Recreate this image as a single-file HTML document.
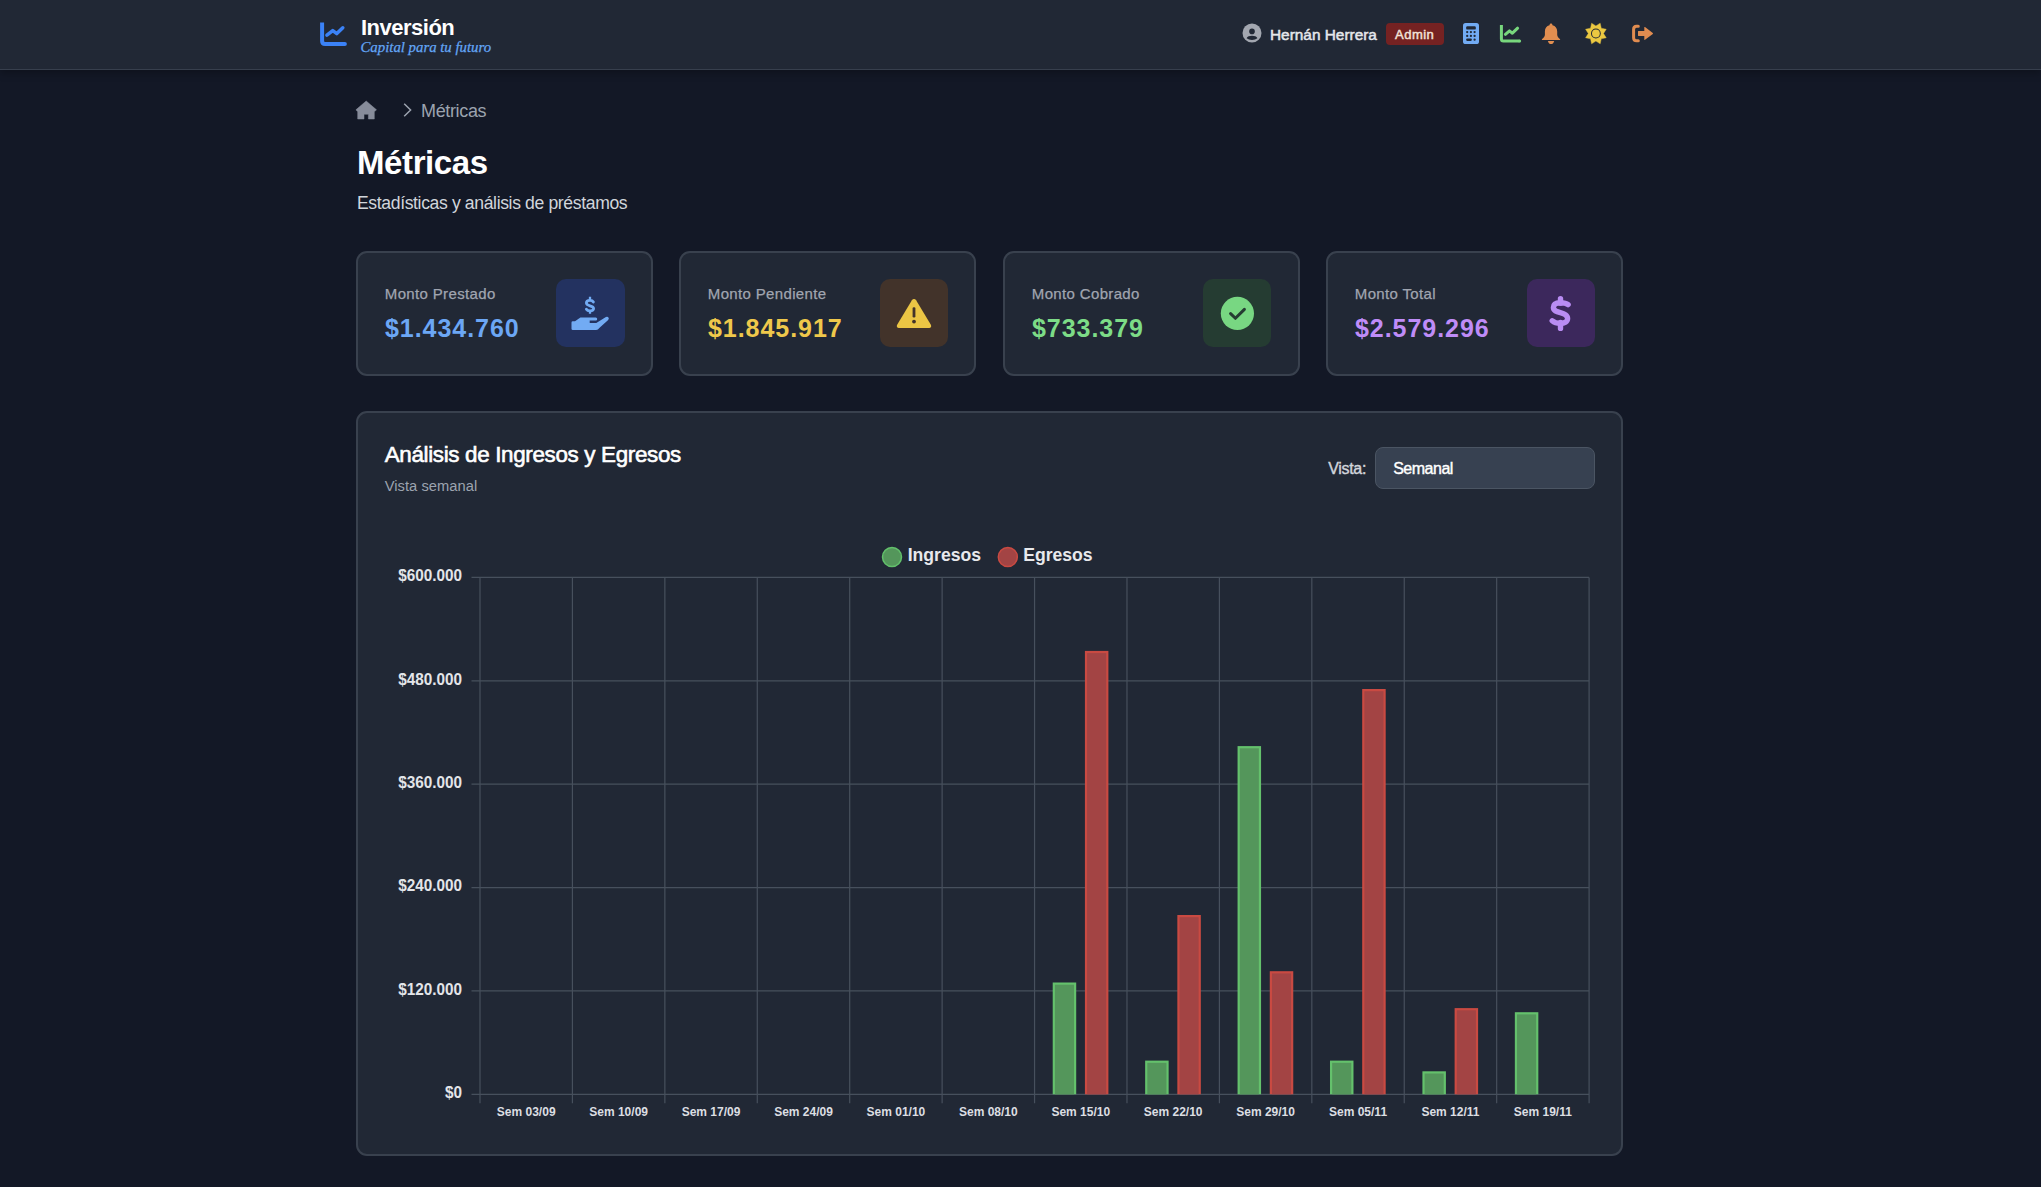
<!DOCTYPE html>
<html lang="es"><head><meta charset="utf-8"><title>Métricas</title>
<style>
*{margin:0;padding:0;box-sizing:border-box}
html,body{width:2041px;height:1187px;overflow:hidden;background:#131826}
body{position:relative;font-family:'Liberation Sans',sans-serif}
.t{position:absolute;white-space:nowrap;line-height:1}
.a{position:absolute}
.card{position:absolute;background:#212835;border:2px solid #39414e;border-radius:11px}
.ib{position:absolute;border-radius:10px}
</style></head>
<body>
<div class="a" style="left:0;top:0;width:2041px;height:70px;background:#212835;border-bottom:1px solid #373f4d;box-shadow:0 3px 8px rgba(0,0,0,0.28)"></div>
<svg class="a" style="left:318px;top:20px" width="32" height="30" viewBox="0 0 32 30">
<path d="M4.1 2.6 V20.9 Q4.1 23.9 7.1 23.9 H26.9" fill="none" stroke="#3b82f6" stroke-width="4" stroke-linecap="butt" stroke-linejoin="round"/>
<circle cx="26.9" cy="23.9" r="2" fill="#3b82f6"/>
<path d="M8.9 15.1 L14.75 10.6 L18.8 13.6 L24.8 7.8" fill="none" stroke="#3b82f6" stroke-width="3.5" stroke-linecap="round" stroke-linejoin="round"/>
</svg>
<div class="t" style="left:361.00px;top:17.38px;font-size:22px;color:#ffffff;font-weight:700;letter-spacing:-0.5px;font-family:'Liberation Sans',sans-serif;font-style:normal;">Inversión</div>
<div class="t" style="left:360.50px;top:40.20px;font-size:14.8px;color:#63a6f6;font-weight:400;letter-spacing:0px;font-family:'Liberation Serif',serif;font-style:italic;-webkit-text-stroke:0.25px #63a6f6;">Capital para tu futuro</div>
<svg class="a" style="left:1242px;top:23px" width="20" height="20" viewBox="0 0 20 20">
<circle cx="10" cy="10" r="9.5" fill="#a3a7b0"/>
<circle cx="10" cy="8.4" r="2.8" fill="#212835"/>
<path d="M4.6 15.2 Q6 12.8 10 12.8 Q14 12.8 15.4 15.2 Q13.3 16.9 10 16.9 Q6.7 16.9 4.6 15.2Z" fill="#212835"/>
</svg>
<div class="t" style="left:1270.00px;top:26.96px;font-size:15.4px;color:#e5e7eb;font-weight:400;letter-spacing:0px;font-family:'Liberation Sans',sans-serif;font-style:normal;-webkit-text-stroke:0.5px #e5e7eb;">Hernán Herrera</div>
<div class="a" style="left:1386px;top:23px;width:58px;height:22px;background:#752222;border-radius:4px"></div>
<div class="t" style="left:1395.00px;top:27.70px;font-size:13px;color:#f3e2d8;font-weight:400;letter-spacing:0.5px;font-family:'Liberation Sans',sans-serif;font-style:normal;-webkit-text-stroke:0.45px #f3e2d8;">Admin</div>
<svg class="a" style="left:1463px;top:23px" width="16" height="21" viewBox="0 0 16 21">
<rect x="0" y="0" width="16" height="21" rx="2.6" fill="#72abf3"/>
<rect x="3.2" y="3.2" width="9.6" height="3.4" rx="1.2" fill="#212835"/>
<g fill="#212835"><circle cx="4.2" cy="9.1" r="1.15"/><circle cx="7.9" cy="9.1" r="1.15"/><circle cx="11.6" cy="9.1" r="1.15"/>
<circle cx="4.2" cy="12.9" r="1.15"/><circle cx="7.9" cy="12.9" r="1.15"/><circle cx="11.6" cy="12.9" r="1.15"/>
<rect x="3.1" y="15.6" width="5.8" height="2.3" rx="1.1"/><circle cx="11.6" cy="16.7" r="1.15"/></g>
</svg>
<svg class="a" style="left:1499px;top:24px" width="23" height="20" viewBox="0 0 23 20">
<path d="M2.4 1 V14.9 Q2.4 16.9 4.4 16.9 H20.6" fill="none" stroke="#78d77d" stroke-width="3" stroke-linecap="butt"/>
<circle cx="20.6" cy="16.9" r="1.5" fill="#78d77d"/>
<path d="M6.4 10.4 L10.5 6.9 L13.4 9.2 L18.6 4.2" fill="none" stroke="#78d77d" stroke-width="3" stroke-linecap="round" stroke-linejoin="round"/>
</svg>
<svg class="a" style="left:1541px;top:23px" width="20" height="22" viewBox="0 0 20 22">
<path d="M10 0.6 C10.8 0.6 11.4 1.3 11.5 2.3 C14.5 2.9 16.2 5.4 16.2 8.6 V11.8 C16.2 13.6 17.6 15.2 19.1 16.2 V17 H0.9 V16.2 C2.4 15.2 3.9 13.6 3.9 11.8 V8.6 C3.9 5.4 5.5 2.9 8.5 2.3 C8.6 1.3 9.2 0.6 10 0.6Z" fill="#e18e50"/>
<path d="M6.9 18 H13.2 C12.8 20 11.6 21.1 10 21.1 C8.4 21.1 7.3 20 6.9 18Z" fill="#e18e50"/>
</svg>
<svg class="a" style="left:1585px;top:22px" width="22" height="23" viewBox="0 0 22 23">
<polygon points="10.90,3.90 15.19,1.15 16.27,6.13 21.25,7.21 18.50,11.50 21.25,15.79 16.27,16.87 15.19,21.85 10.90,19.10 6.61,21.85 5.53,16.87 0.55,15.79 3.30,11.50 0.55,7.21 5.53,6.13 6.61,1.15" fill="#ebc841" stroke="#ebc841" stroke-width="0.4" stroke-linejoin="round"/>
<circle cx="10.9" cy="11.5" r="4.9" fill="#212835"/><circle cx="10.9" cy="11.5" r="3.9" fill="#ebc841"/>
</svg>
<svg class="a" style="left:1631px;top:24px" width="23" height="19" viewBox="0 0 23 19">
<path d="M7.3 2.2 H5.6 Q2.6 2.2 2.6 5.2 V13.8 Q2.6 16.8 5.6 16.8 H7.3" fill="none" stroke="#e18c50" stroke-width="3" stroke-linecap="round"/>
<path d="M7.4 6.9 H13.3 V3.3 Q13.3 2.6 14 3.1 L21.8 9 Q22.2 9.45 21.8 9.9 L14 15.8 Q13.3 16.3 13.3 15.6 V12 H7.4 Q7 12 7 11.6 V7.3 Q7 6.9 7.4 6.9Z" fill="#e18c50"/>
</svg>
<svg class="a" style="left:355px;top:100px" width="22" height="20" viewBox="0 0 22 20">
<path d="M11.2 1 L21.5 9.85 L19.3 11.8 V19 H13.4 V14.3 H9 V19 H2.7 V11.8 L0.9 9.85 Z" fill="#878c9a" stroke="#878c9a" stroke-width="0.5" stroke-linejoin="round"/>
</svg>
<svg class="a" style="left:402px;top:102px" width="11" height="16" viewBox="0 0 11 16">
<path d="M2.2 1.8 L8.6 8 L2.2 14.2" fill="none" stroke="#9ca3af" stroke-width="1.5"/>
</svg>
<div class="t" style="left:421.00px;top:101.56px;font-size:18px;color:#9ca3af;font-weight:400;letter-spacing:-0.35px;font-family:'Liberation Sans',sans-serif;font-style:normal;">Métricas</div>
<div class="t" style="left:357.00px;top:146.17px;font-size:33px;color:#ffffff;font-weight:700;letter-spacing:-0.4px;font-family:'Liberation Sans',sans-serif;font-style:normal;">Métricas</div>
<div class="t" style="left:357.00px;top:194.50px;font-size:17.6px;color:#d1d5db;font-weight:400;letter-spacing:-0.37px;font-family:'Liberation Sans',sans-serif;font-style:normal;">Estadísticas y análisis de préstamos</div>
<div class="card" style="left:356px;top:251px;width:297px;height:125px"></div>
<div class="t" style="left:384.80px;top:286.20px;font-size:15px;color:#a0a5b0;font-weight:400;letter-spacing:0.35px;font-family:'Liberation Sans',sans-serif;font-style:normal;-webkit-text-stroke:0.25px #a0a5b0;">Monto Prestado</div>
<div class="t" style="left:385.00px;top:315.74px;font-size:25px;color:#6ca7f5;font-weight:700;letter-spacing:0.95px;font-family:'Liberation Sans',sans-serif;font-style:normal;">$1.434.760</div>
<div class="ib" style="left:556px;top:279px;width:69px;height:68px;background:#233260"></div>
<svg class="a" style="left:571px;top:296px" width="38" height="35" viewBox="0 0 38 35">
<path d="M19 0.8 V4.4 M19 14.9 V17.7" stroke="#72abf3" stroke-width="2.3"/>
<path d="M22.4 6 C21.8 4.9 20.6 4.4 19 4.4 C16.9 4.4 15.4 5.4 15.4 7.1 C15.4 8.8 17 9.3 19 9.8 C21 10.3 22.6 10.9 22.6 12.6 C22.6 14.1 21.2 14.9 19 14.9 C17.4 14.9 16.1 14.4 15.4 13.2" fill="none" stroke="#72abf3" stroke-width="2.8" stroke-linecap="round"/>
<path d="M0.5 26.6 Q0.5 25.3 1.8 25.3 H4 L9.4 21.6 H24.8 Q26.2 21.6 26.2 23.1 Q26.2 24.6 24.8 24.6 H18.7 V27.1 H25.3 L34.9 21 Q36.6 20.1 37.6 21.7 Q38.2 23.1 36.9 24.2 L28.3 32.1 Q27.2 34 25.1 34 H1.8 Q0.5 34 0.5 32.7Z" fill="#72abf3"/>
</svg>
<div class="card" style="left:679px;top:251px;width:297px;height:125px"></div>
<div class="t" style="left:707.80px;top:286.20px;font-size:15px;color:#a0a5b0;font-weight:400;letter-spacing:0.35px;font-family:'Liberation Sans',sans-serif;font-style:normal;-webkit-text-stroke:0.25px #a0a5b0;">Monto Pendiente</div>
<div class="t" style="left:708.00px;top:315.74px;font-size:25px;color:#efc84b;font-weight:700;letter-spacing:0.95px;font-family:'Liberation Sans',sans-serif;font-style:normal;">$1.845.917</div>
<div class="ib" style="left:880px;top:279px;width:68px;height:68px;background:#42332a"></div>
<svg class="a" style="left:896px;top:298px" width="36" height="31" viewBox="0 0 36 31">
<path d="M18 1 Q19.3 1 20.1 2.3 L35 27 Q35.8 29.6 33.2 30 H2.8 Q0.2 29.6 1 27 L15.9 2.3 Q16.7 1 18 1Z" fill="#ebc544"/>
<rect x="16.6" y="9.2" width="2.8" height="10.2" rx="1.2" fill="#42332a"/>
<circle cx="18" cy="23.6" r="1.9" fill="#42332a"/>
</svg>
<div class="card" style="left:1003px;top:251px;width:297px;height:125px"></div>
<div class="t" style="left:1031.80px;top:286.20px;font-size:15px;color:#a0a5b0;font-weight:400;letter-spacing:0.35px;font-family:'Liberation Sans',sans-serif;font-style:normal;-webkit-text-stroke:0.25px #a0a5b0;">Monto Cobrado</div>
<div class="t" style="left:1032.00px;top:315.74px;font-size:25px;color:#7ddc87;font-weight:700;letter-spacing:0.95px;font-family:'Liberation Sans',sans-serif;font-style:normal;">$733.379</div>
<div class="ib" style="left:1203px;top:279px;width:68px;height:68px;background:#253c32"></div>
<svg class="a" style="left:1220px;top:296px" width="35" height="35" viewBox="0 0 35 35">
<circle cx="17.4" cy="17.4" r="16.6" fill="#78d782"/>
<path d="M10.6 17.6 L15.4 22.3 L24.4 13.4" fill="none" stroke="#253c32" stroke-width="3" stroke-linecap="round" stroke-linejoin="round"/>
</svg>
<div class="card" style="left:1326px;top:251px;width:297px;height:125px"></div>
<div class="t" style="left:1354.80px;top:286.20px;font-size:15px;color:#a0a5b0;font-weight:400;letter-spacing:0.35px;font-family:'Liberation Sans',sans-serif;font-style:normal;-webkit-text-stroke:0.25px #a0a5b0;">Monto Total</div>
<div class="t" style="left:1355.00px;top:315.74px;font-size:25px;color:#bf8cf8;font-weight:700;letter-spacing:0.95px;font-family:'Liberation Sans',sans-serif;font-style:normal;">$2.579.296</div>
<div class="ib" style="left:1527px;top:279px;width:68px;height:68px;background:#3c285c"></div>
<svg class="a" style="left:1549px;top:295px" width="22" height="37" viewBox="0 0 22 37">
<path d="M11.5 3.6 V8 M11.5 27.5 V33.4" stroke="#b98cf3" stroke-width="5.4" stroke-linecap="round"/>
<path d="M19.1 9.6 C17.5 8.3 14.8 7.7 11.3 7.7 C7 7.8 4.4 9.6 4.4 12.6 C4.4 15.8 7.4 16.7 11.3 17.7 C15.3 18.8 18.6 19.9 18.6 23.6 C18.6 26.7 15.6 28.4 11.2 28.4 C7.6 28.4 5 27.4 3.2 25.8" fill="none" stroke="#b98cf3" stroke-width="5.4" stroke-linecap="round"/>
</svg>
<div class="card" style="left:356px;top:411px;width:1267px;height:745px"></div>
<div class="t" style="left:384.70px;top:444.24px;font-size:22.4px;color:#ffffff;font-weight:400;letter-spacing:-0.33px;font-family:'Liberation Sans',sans-serif;font-style:normal;-webkit-text-stroke:0.6px #ffffff;">Análisis de Ingresos y Egresos</div>
<div class="t" style="left:384.70px;top:479.36px;font-size:14.7px;color:#9ca3af;font-weight:400;letter-spacing:0.05px;font-family:'Liberation Sans',sans-serif;font-style:normal;">Vista semanal</div>
<div class="t" style="left:1328.20px;top:460.56px;font-size:16px;color:#d1d5db;font-weight:400;letter-spacing:-0.3px;font-family:'Liberation Sans',sans-serif;font-style:normal;-webkit-text-stroke:0.4px #d1d5db;">Vista:</div>
<div class="a" style="left:1375px;top:447px;width:220px;height:42px;background:#374151;border:1px solid #4b5563;border-radius:8px"></div>
<div class="t" style="left:1393.20px;top:460.56px;font-size:16px;color:#ffffff;font-weight:400;letter-spacing:-0.5px;font-family:'Liberation Sans',sans-serif;font-style:normal;-webkit-text-stroke:0.4px #ffffff;">Semanal</div>
<svg class="a" style="left:0;top:0" width="2041" height="1187" viewBox="0 0 2041 1187">
<line x1="471.5" y1="577.40" x2="1589.10" y2="577.40" stroke="#47505d" stroke-width="1.2"/>
<line x1="471.5" y1="680.78" x2="1589.10" y2="680.78" stroke="#47505d" stroke-width="1.2"/>
<line x1="471.5" y1="784.16" x2="1589.10" y2="784.16" stroke="#47505d" stroke-width="1.2"/>
<line x1="471.5" y1="887.54" x2="1589.10" y2="887.54" stroke="#47505d" stroke-width="1.2"/>
<line x1="471.5" y1="990.92" x2="1589.10" y2="990.92" stroke="#47505d" stroke-width="1.2"/>
<line x1="471.5" y1="1094.30" x2="1589.10" y2="1094.30" stroke="#47505d" stroke-width="1.2"/>
<line x1="480.00" y1="577.40" x2="480.00" y2="1103.3" stroke="#47505d" stroke-width="1.2"/>
<line x1="572.42" y1="577.40" x2="572.42" y2="1103.3" stroke="#47505d" stroke-width="1.2"/>
<line x1="664.85" y1="577.40" x2="664.85" y2="1103.3" stroke="#47505d" stroke-width="1.2"/>
<line x1="757.27" y1="577.40" x2="757.27" y2="1103.3" stroke="#47505d" stroke-width="1.2"/>
<line x1="849.70" y1="577.40" x2="849.70" y2="1103.3" stroke="#47505d" stroke-width="1.2"/>
<line x1="942.12" y1="577.40" x2="942.12" y2="1103.3" stroke="#47505d" stroke-width="1.2"/>
<line x1="1034.55" y1="577.40" x2="1034.55" y2="1103.3" stroke="#47505d" stroke-width="1.2"/>
<line x1="1126.97" y1="577.40" x2="1126.97" y2="1103.3" stroke="#47505d" stroke-width="1.2"/>
<line x1="1219.40" y1="577.40" x2="1219.40" y2="1103.3" stroke="#47505d" stroke-width="1.2"/>
<line x1="1311.82" y1="577.40" x2="1311.82" y2="1103.3" stroke="#47505d" stroke-width="1.2"/>
<line x1="1404.25" y1="577.40" x2="1404.25" y2="1103.3" stroke="#47505d" stroke-width="1.2"/>
<line x1="1496.67" y1="577.40" x2="1496.67" y2="1103.3" stroke="#47505d" stroke-width="1.2"/>
<line x1="1589.10" y1="577.40" x2="1589.10" y2="1103.3" stroke="#47505d" stroke-width="1.2"/>
<rect x="1052.71" y="982.50" width="23.50" height="111.80" fill="#64c16c"/>
<rect x="1054.91" y="984.70" width="19.10" height="109.60" fill="#54965b"/>
<rect x="1084.91" y="650.90" width="23.50" height="443.40" fill="#c94a42"/>
<rect x="1087.11" y="653.10" width="19.10" height="441.20" fill="#a34444"/>
<rect x="1145.14" y="1060.60" width="23.50" height="33.70" fill="#64c16c"/>
<rect x="1147.34" y="1062.80" width="19.10" height="31.50" fill="#54965b"/>
<rect x="1177.34" y="915.00" width="23.50" height="179.30" fill="#c94a42"/>
<rect x="1179.54" y="917.20" width="19.10" height="177.10" fill="#a34444"/>
<rect x="1237.56" y="746.10" width="23.50" height="348.20" fill="#64c16c"/>
<rect x="1239.76" y="748.30" width="19.10" height="346.00" fill="#54965b"/>
<rect x="1269.76" y="971.20" width="23.50" height="123.10" fill="#c94a42"/>
<rect x="1271.96" y="973.40" width="19.10" height="120.90" fill="#a34444"/>
<rect x="1329.99" y="1060.60" width="23.50" height="33.70" fill="#64c16c"/>
<rect x="1332.19" y="1062.80" width="19.10" height="31.50" fill="#54965b"/>
<rect x="1362.19" y="689.00" width="23.50" height="405.30" fill="#c94a42"/>
<rect x="1364.39" y="691.20" width="19.10" height="403.10" fill="#a34444"/>
<rect x="1422.41" y="1071.30" width="23.50" height="23.00" fill="#64c16c"/>
<rect x="1424.61" y="1073.50" width="19.10" height="20.80" fill="#54965b"/>
<rect x="1454.61" y="1008.10" width="23.50" height="86.20" fill="#c94a42"/>
<rect x="1456.81" y="1010.30" width="19.10" height="84.00" fill="#a34444"/>
<rect x="1514.84" y="1012.20" width="23.50" height="82.10" fill="#64c16c"/>
<rect x="1517.04" y="1014.40" width="19.10" height="79.90" fill="#54965b"/>
<circle cx="892" cy="557" r="9.5" fill="#54965b" stroke="#62c06b" stroke-width="1.5"/>
<circle cx="1007.8" cy="557" r="9.5" fill="#a34444" stroke="#c94a42" stroke-width="1.5"/>
</svg>
<div class="t" style="left:907.70px;top:547.30px;font-size:17.6px;color:#e8e9ec;font-weight:700;letter-spacing:0px;font-family:'Liberation Sans',sans-serif;font-style:normal;">Ingresos</div>
<div class="t" style="left:1023.20px;top:547.30px;font-size:17.6px;color:#e8e9ec;font-weight:700;letter-spacing:0px;font-family:'Liberation Sans',sans-serif;font-style:normal;">Egresos</div>
<div class="t" style="left:462.00px;top:568.26px;font-size:16px;color:#e3e5e9;font-weight:700;letter-spacing:0px;font-family:'Liberation Sans',sans-serif;font-style:normal;transform:translateX(-100%) scaleX(0.956);transform-origin:right top;">$600.000</div>
<div class="t" style="left:462.00px;top:671.64px;font-size:16px;color:#e3e5e9;font-weight:700;letter-spacing:0px;font-family:'Liberation Sans',sans-serif;font-style:normal;transform:translateX(-100%) scaleX(0.956);transform-origin:right top;">$480.000</div>
<div class="t" style="left:462.00px;top:775.02px;font-size:16px;color:#e3e5e9;font-weight:700;letter-spacing:0px;font-family:'Liberation Sans',sans-serif;font-style:normal;transform:translateX(-100%) scaleX(0.956);transform-origin:right top;">$360.000</div>
<div class="t" style="left:462.00px;top:878.40px;font-size:16px;color:#e3e5e9;font-weight:700;letter-spacing:0px;font-family:'Liberation Sans',sans-serif;font-style:normal;transform:translateX(-100%) scaleX(0.956);transform-origin:right top;">$240.000</div>
<div class="t" style="left:462.00px;top:981.78px;font-size:16px;color:#e3e5e9;font-weight:700;letter-spacing:0px;font-family:'Liberation Sans',sans-serif;font-style:normal;transform:translateX(-100%) scaleX(0.956);transform-origin:right top;">$120.000</div>
<div class="t" style="left:462.00px;top:1085.16px;font-size:16px;color:#e3e5e9;font-weight:700;letter-spacing:0px;font-family:'Liberation Sans',sans-serif;font-style:normal;transform:translateX(-100%) scaleX(0.956);transform-origin:right top;">$0</div>
<div class="t" style="left:526.21px;top:1106.04px;font-size:12px;color:#dcdee2;font-weight:700;letter-spacing:0px;font-family:'Liberation Sans',sans-serif;font-style:normal;transform:translateX(-50%);">Sem 03/09</div>
<div class="t" style="left:618.64px;top:1106.04px;font-size:12px;color:#dcdee2;font-weight:700;letter-spacing:0px;font-family:'Liberation Sans',sans-serif;font-style:normal;transform:translateX(-50%);">Sem 10/09</div>
<div class="t" style="left:711.06px;top:1106.04px;font-size:12px;color:#dcdee2;font-weight:700;letter-spacing:0px;font-family:'Liberation Sans',sans-serif;font-style:normal;transform:translateX(-50%);">Sem 17/09</div>
<div class="t" style="left:803.49px;top:1106.04px;font-size:12px;color:#dcdee2;font-weight:700;letter-spacing:0px;font-family:'Liberation Sans',sans-serif;font-style:normal;transform:translateX(-50%);">Sem 24/09</div>
<div class="t" style="left:895.91px;top:1106.04px;font-size:12px;color:#dcdee2;font-weight:700;letter-spacing:0px;font-family:'Liberation Sans',sans-serif;font-style:normal;transform:translateX(-50%);">Sem 01/10</div>
<div class="t" style="left:988.34px;top:1106.04px;font-size:12px;color:#dcdee2;font-weight:700;letter-spacing:0px;font-family:'Liberation Sans',sans-serif;font-style:normal;transform:translateX(-50%);">Sem 08/10</div>
<div class="t" style="left:1080.76px;top:1106.04px;font-size:12px;color:#dcdee2;font-weight:700;letter-spacing:0px;font-family:'Liberation Sans',sans-serif;font-style:normal;transform:translateX(-50%);">Sem 15/10</div>
<div class="t" style="left:1173.19px;top:1106.04px;font-size:12px;color:#dcdee2;font-weight:700;letter-spacing:0px;font-family:'Liberation Sans',sans-serif;font-style:normal;transform:translateX(-50%);">Sem 22/10</div>
<div class="t" style="left:1265.61px;top:1106.04px;font-size:12px;color:#dcdee2;font-weight:700;letter-spacing:0px;font-family:'Liberation Sans',sans-serif;font-style:normal;transform:translateX(-50%);">Sem 29/10</div>
<div class="t" style="left:1358.04px;top:1106.04px;font-size:12px;color:#dcdee2;font-weight:700;letter-spacing:0px;font-family:'Liberation Sans',sans-serif;font-style:normal;transform:translateX(-50%);">Sem 05/11</div>
<div class="t" style="left:1450.46px;top:1106.04px;font-size:12px;color:#dcdee2;font-weight:700;letter-spacing:0px;font-family:'Liberation Sans',sans-serif;font-style:normal;transform:translateX(-50%);">Sem 12/11</div>
<div class="t" style="left:1542.89px;top:1106.04px;font-size:12px;color:#dcdee2;font-weight:700;letter-spacing:0px;font-family:'Liberation Sans',sans-serif;font-style:normal;transform:translateX(-50%);">Sem 19/11</div>

</body></html>
